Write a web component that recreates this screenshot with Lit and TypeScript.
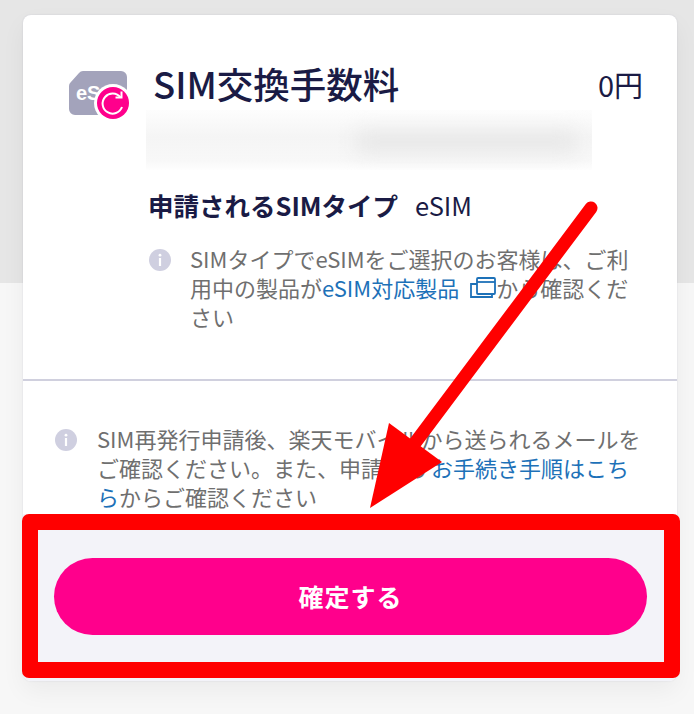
import { LitElement, html, css } from "lit";
import { customElement } from "lit/decorators.js";

@customElement("app-root")
export class AppRoot extends LitElement {
  static styles = css`
    :host {
      display: block;
      position: relative;
      width: 694px;
      height: 714px;
      overflow: hidden;
      background: linear-gradient(#e6e6e6 0, #e6e6e6 283px, #f7f7f7 283px);
      font-family: "Noto Sans CJK JP", "Noto Sans", sans-serif;
      color: #1a1b45;
    }
    .page { padding: 15px 17px 0 23px; }
    .card {
      height: 666px;
      background: #fff;
      border-radius: 8px;
      overflow: hidden;
      display: flex;
      flex-direction: column;
      box-shadow: 0 10px 24px rgba(0, 0, 0, 0.05), 0 0 2px rgba(60, 60, 120, 0.12);
    }
    .product { padding: 44px 34px 0 46px; height: 320px; box-sizing: content-box; }
    .head { display: flex; align-items: flex-start; height: 51px; }
    .sim { width: 60px; height: 60px; margin-top: 12px; flex: none; display: block; }
    .title {
      margin-left: 24px;
      font-size: 36.5px;
      line-height: 50px;
      font-weight: 500;
      flex: 1;
      white-space: nowrap;
    }
    .price { font-size: 29px; line-height: 51px; font-weight: 400; white-space: nowrap; }
    .blur {
      position: relative;
      margin: 0 51px 0 77px;
      height: 60px;
      background: linear-gradient(#fdfdfd, #f5f5f5 45%, #f8f8f8 85%, #fefefe);
      overflow: hidden;
    }
    .blur i {
      position: absolute;
      left: 210px;
      top: 22px;
      width: 220px;
      height: 20px;
      background: #e6e6e6;
      filter: blur(10px);
    }
    .type {
      margin: 17px 0 0 79px;
      display: flex;
      gap: 17px;
      align-items: baseline;
      font-size: 25.5px;
      line-height: 36px;
      white-space: nowrap;
    }
    .type b { font-weight: 700; }
    .type span { font-size: 25.5px; }
    .note {
      display: flex;
      gap: 19px;
      font-size: 22px;
      line-height: 29px;
      color: #6f6f6f;
    }
    .note svg.info { width: 22px; height: 22px; flex: none; margin-top: 5px; }
    .n1 { margin: 21px 0 0 80px; width: 490px; }
    .n2 { margin: 43px 0 0 32px; width: 590px; gap: 20px; }
    .note a { color: #1d71b8; text-decoration: none; }
    .n2 a { margin-left: 4px; }
    .ext { width: 26px; height: 23px; display: inline-block; vertical-align: -3px; margin-left: 11px; }
    hr {
      margin: 0;
      border: 0;
      border-top: 2px solid #d0d0de;
      flex: none;
    }
    .foot {
      margin-top: auto;
      height: 167px;
      background: #f3f3f9;
      padding: 44px 30px 0 31px;
      box-sizing: border-box;
      flex: none;
    }
    button {
      display: block;
      width: 100%;
      height: 77px;
      border: 0;
      border-radius: 39px;
      background: #ff008c;
      color: #fff;
      font: 700 25px/1 "Noto Sans CJK JP", sans-serif;
      letter-spacing: 1px;
    }
    .frame {
      position: absolute;
      left: 22px;
      top: 514px;
      width: 658px;
      height: 164px;
      box-sizing: border-box;
      border: 16px solid #ff0000;
      border-radius: 7px;
      pointer-events: none;
    }
    .arrow { position: absolute; left: 0; top: 0; width: 694px; height: 714px; pointer-events: none; }
  `;

  render() {
    const info = html`<svg class="info" viewBox="0 0 22 22">
      <circle cx="11" cy="11" r="11" fill="#cfcfe0"></circle>
      <circle cx="11" cy="6.2" r="1.4" fill="#fff"></circle>
      <rect x="9.9" y="9" width="2.2" height="8" fill="#fff"></rect>
    </svg>`;
    return html`
      <div class="page">
        <div class="card">
          <div class="product">
            <div class="head">
              <svg class="sim" viewBox="0 0 60 60">
                <path d="M14 0 H52 a6 6 0 0 1 6 6 V38 a6 6 0 0 1 -6 6 H6 a6 6 0 0 1 -6 -6 V15 a5 5 0 0 1 1.5 -3.5 L10 2 a5 5 0 0 1 4 -2 Z" fill="#a3a3bb"></path>
                <text x="7" y="29" font-family="Liberation Sans, sans-serif" font-weight="700" font-size="20" fill="#fff">eS</text>
                <circle cx="44" cy="32" r="19" fill="#fff"></circle>
                <circle cx="44" cy="32" r="16" fill="#ff008c"></circle>
                <path d="M51.5 26.5 A10 10 0 1 0 53 36" fill="none" stroke="#fff" stroke-width="2"></path>
                <path d="M46.5 26.5 H52.5 V20.5" fill="none" stroke="#fff" stroke-width="2"></path>
              </svg>
              <div class="title">SIM交換手数料</div>
              <div class="price">0円</div>
            </div>
            <div class="blur"><i></i></div>
            <div class="type"><b>申請されるSIMタイプ</b><span>eSIM</span></div>
            <div class="note n1">
              ${info}
              <div>SIMタイプでeSIMをご選択のお客様は、ご利用中の製品が<a>eSIM対応製品<svg class="ext" viewBox="0 0 26 23" fill="none" stroke="#1d71b8" stroke-width="1.8"><rect x="7" y="1" width="18" height="16" rx="1"></rect><path d="M7 5 H25"></path><path d="M7 7 H1 V20 H22 V17"></path></svg></a>から確認ください</div>
            </div>
          </div>
          <hr />
          <div class="note n2">
            ${info}
            <div>SIM再発行申請後、楽天モバイルから送られるメールをご確認ください。また、申請後の<a>お手続き手順はこちら</a>からご確認ください</div>
          </div>
          <div class="foot"><button>確定する</button></div>
        </div>
      </div>
      <div class="frame"></div>
      <svg class="arrow" viewBox="0 0 694 714">
        <path d="M591 208 L415 443" stroke="#ff0000" stroke-width="13" stroke-linecap="round" fill="none"></path>
        <path d="M370 508 L389 423 L442 462 Z" fill="#ff0000"></path>
      </svg>
    `;
  }
}
